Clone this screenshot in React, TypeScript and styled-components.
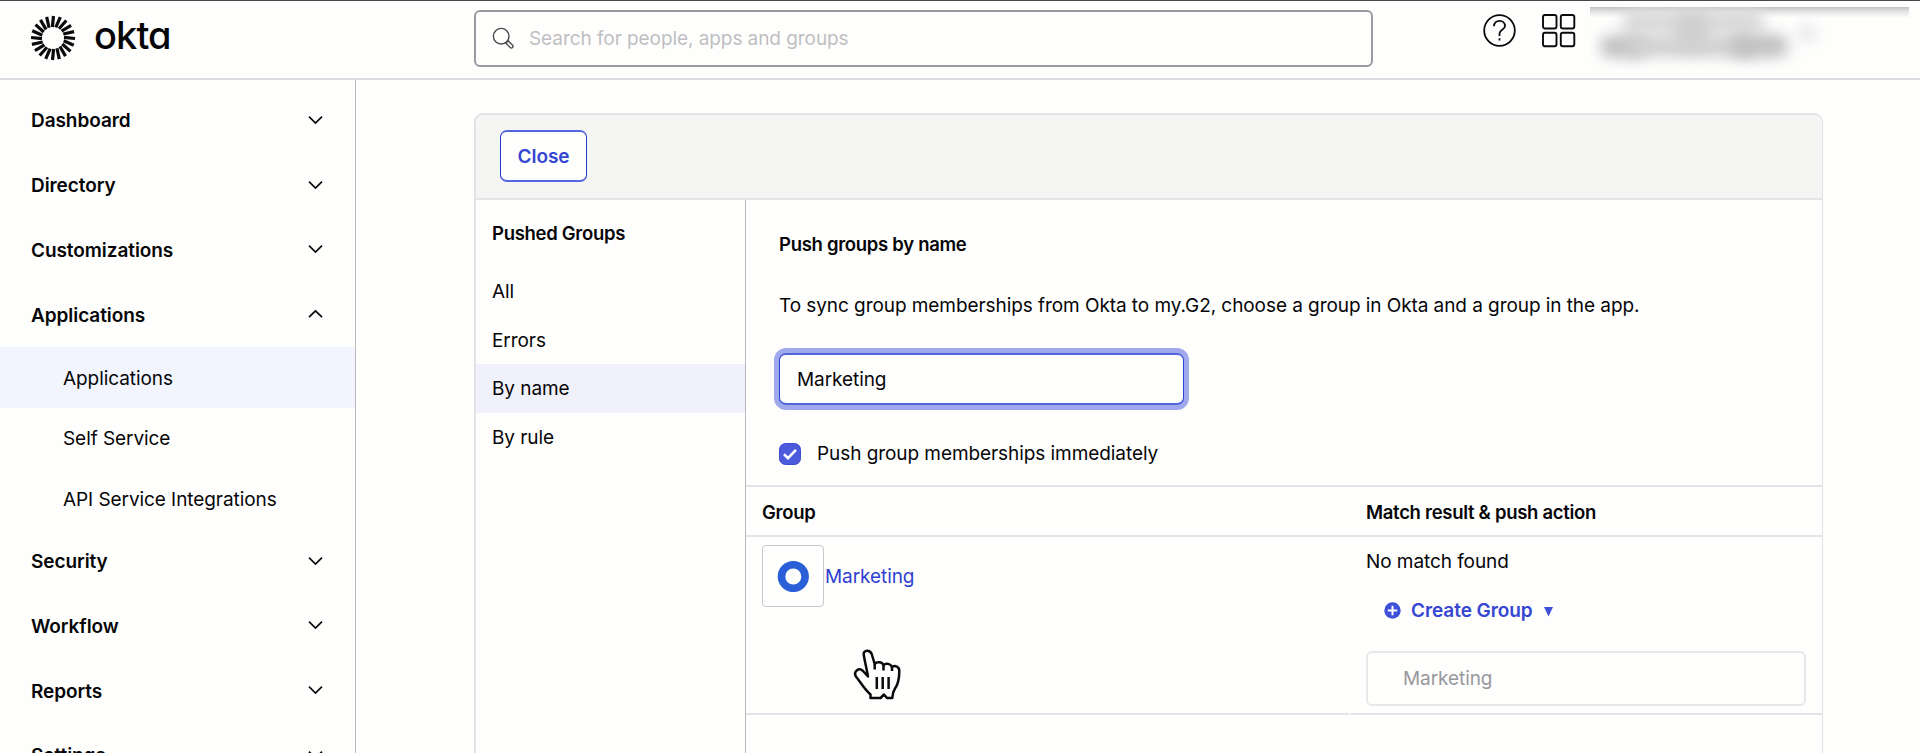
import React from 'react';
import styled, { createGlobalStyle, css } from 'styled-components';

const Global = createGlobalStyle`
  *, *::before, *::after { box-sizing: border-box; }
  body {
    margin: 0;
    background: #fefefd;
    color: #060608;
    font-family: Inter, 'Liberation Sans', sans-serif;
    font-size: 19px;
    letter-spacing: -0.07px;
    overflow: hidden;
  }
  input, button { font: inherit; letter-spacing: inherit; }
`;

const Page = styled.div`
  display: flex;
  flex-direction: column;
  height: 753px;
  overflow: hidden;
  border-top: 1px solid #47474c;
`;

const Header = styled.header`
  display: flex;
  align-items: flex-start;
  flex: none;
  height: 79px;
  border-bottom: 2px solid #dcdce1;
`;

const Brand = styled.div`
  display: flex;
  align-items: center;
  width: 474px;
  height: 74px;
  padding-left: 30px;
  gap: 18px;
`;

const Wordmark = styled.span`
  font-size: 38px;
  font-weight: 550;
  line-height: 40px;
  letter-spacing: -0.9px;
  font-feature-settings: 'cv11' 1;
  margin-top: -7px;
`;

const SearchBox = styled.div`
  display: flex;
  align-items: center;
  width: 899px;
  height: 57px;
  margin-top: 9px;
  padding-left: 16px;
  gap: 14px;
  border: 2px solid #9a9aa4;
  border-radius: 6px;
`;

const SearchInput = styled.input`
  flex: 1;
  border: 0;
  padding: 0;
  outline: 0;
  background: none;
  &::placeholder { color: #bfbfc2; opacity: 1; }
`;

const Tools = styled.div`
  display: flex;
  margin: 12px 14px 0 109px;
  gap: 25px;
`;

const Account = styled.div`
  position: relative;
  width: 319px;
  height: 71px;
  margin-top: 6px;
  overflow: hidden;
  background: linear-gradient(#c2c2c4 0, #e6e6e8 5px, #fefefd 11px);
`;

const Smudge = styled.span<{ $x: number; $y: number; $w: number; $h: number; $c: string }>`
  position: absolute;
  left: ${p => p.$x}px;
  top: ${p => p.$y}px;
  width: ${p => p.$w}px;
  height: ${p => p.$h}px;
  border-radius: 10px;
  background: ${p => p.$c};
  filter: blur(7px);
`;

const Body = styled.div`
  display: flex;
  flex: 1;
  min-height: 0;
`;

const Sidebar = styled.nav`
  flex: none;
  width: 356px;
  padding-top: 8px;
  border-right: 1px solid #b9b9bd;
  overflow: hidden;
`;

const NavItem = styled.div`
  display: flex;
  align-items: center;
  justify-content: space-between;
  height: 64.8px;
  padding: 1px 32px 0 31px;
  font-weight: 600;
`;

const SubItem = styled.div<{ $active?: boolean }>`
  display: flex;
  align-items: center;
  height: 60.5px;
  padding: 2px 0 0 63px;
  background: ${p => (p.$active ? '#f2f5fd' : 'transparent')};
`;

const Content = styled.main`
  flex: 1;
  min-width: 0;
  padding: 33px 97px 0 118px;
`;

const Card = styled.section`
  display: flex;
  flex-direction: column;
  height: 700px;
  border: 2px solid #e1e1e6;
  border-right-width: 1px;
  border-radius: 9px;
  overflow: hidden;
`;

const CardHeader = styled.div`
  flex: none;
  height: 85px;
  padding: 15px 0 0 24px;
  background: #f5f5f4;
  border-bottom: 2px solid #e4e4e4;
`;

const CloseButton = styled.button`
  width: 87px;
  height: 52px;
  padding: 1px 0 0;
  border: 1px solid;
  border-width: 2px 1px;
  border-color: #5566df #2436d0;
  border-radius: 7px;
  background: #fefefd;
  color: #3546d3;
  font-weight: 600;
`;

const Columns = styled.div`
  display: flex;
  flex: 1;
`;

const Filters = styled.aside`
  width: 270px;
  padding-top: 9px;
  border-right: 1px solid #b9b9bd;
`;

const heading = css`
  font-size: 18.5px;
  font-weight: 600;
  letter-spacing: -0.3px;
`;

const FilterTitle = styled.h3`
  ${heading}
  margin: 0 0 10px;
  padding-left: 16px;
  line-height: 48px;
`;

const FilterItem = styled.div<{ $active?: boolean }>`
  height: 48.6px;
  padding-left: 16px;
  line-height: 49px;
  background: ${p => (p.$active ? '#f1f1fb' : 'transparent')};
`;

const Panel = styled.div`
  flex: 1;
`;

const Form = styled.div`
  height: 285px;
  padding: 29px 33px 0;
`;

const FormTitle = styled.h2`
  ${heading}
  margin: 0;
  line-height: 30px;
`;

const Intro = styled.p`
  margin: 32px 0;
  line-height: 30px;
`;

const GroupInput = styled.input`
  display: block;
  width: 405px;
  height: 52px;
  padding: 0 17px;
  border: 1px solid;
  border-width: 2px 1px;
  border-color: #5365dd #2c3fd6;
  border-radius: 7px;
  outline: 0;
  background: #fefefd;
  box-shadow: 0 0 0 5px #a0a9ec;
  color: inherit;
`;

const CheckRow = styled.label`
  display: flex;
  align-items: center;
  gap: 16px;
  margin-top: 34px;
  line-height: 30px;
`;

const Row = styled.div<{ $h: number; $split?: boolean }>`
  display: grid;
  grid-template-columns: 604px 1fr;
  height: ${p => p.$h}px;
  border-top: 2px solid #e3e3e9;
  ${p =>
    p.$split &&
    css`
      border-top: 0;
      background: linear-gradient(90deg, #e3e3e9 603px, #fefefd 603px 604px, #e3e3e9 604px) top / 100% 2px no-repeat;
    `}
`;

const HeadCell = styled.div`
  ${heading}
  padding-left: 16px;
  line-height: 50px;
`;

const GroupCell = styled.div`
  display: flex;
  align-items: flex-start;
  padding: 8px 0 0 16px;
  line-height: 63px;
`;

const GroupIcon = styled.div`
  display: flex;
  align-items: center;
  justify-content: center;
  width: 62px;
  height: 62px;
  border: 1px solid #c9c9ce;
  border-radius: 4px;
`;

const GroupLink = styled.a`
  padding-left: 1px;
  color: #2f3fd0;
`;

const ActionCell = styled.div`
  padding: 10px 16px 0 16px;
`;

const Status = styled.div`
  line-height: 30px;
`;

const CreateAction = styled.div`
  display: flex;
  align-items: center;
  height: 30px;
  margin: 18px 0 26px;
  padding-left: 18px;
  color: #3546d3;
  font-weight: 600;
`;

const CreateLabel = styled.span`
  margin: 0 11px 0 10px;
`;

const TargetName = styled.div`
  height: 55px;
  padding-left: 35px;
  border: 2px solid #e8e8ea;
  border-radius: 6px;
  color: #98989c;
  line-height: 52px;
`;

const Pointer = styled.svg`
  position: absolute;
  left: 853px;
  top: 649px;
`;

const Chevron = ({ up }: { up?: boolean }) => (
  <svg width="15" height="10" viewBox="0 0 15 10" fill="none" stroke="#0b0b0e" strokeWidth="1.7">
    <path d={up ? 'M1 7.2 7.5 0.8 14 7.2' : 'M1 0.7 7.5 7.1 14 0.7'} />
  </svg>
);

const Burst = () => (
  <svg width="46" height="46" viewBox="-23 -23 46 46" stroke="#0b0b0e" strokeWidth="3.2">
    {Array.from({ length: 20 }, (_, i) => (
      <line key={i} x1="-0.6" y1="-11" x2="0.5" y2="-22" transform={`rotate(${i * 18})`} />
    ))}
  </svg>
);

const before = ['Dashboard', 'Directory', 'Customizations'];
const after = ['Security', 'Workflow', 'Reports', 'Settings'];

export default function App() {
  return (
    <>
      <Global />
      <Page>
        <Header>
          <Brand>
            <Burst />
            <Wordmark>okta</Wordmark>
          </Brand>
          <SearchBox>
            <svg width="23" height="23" viewBox="0 0 23 23" fill="none" stroke="#4b4b50" strokeWidth="1.4">
              <circle cx="9.2" cy="9.2" r="7.8" />
              <path d="M13.8 16.2 16.2 13.8 20.6 18.2A1.7 1.7 0 0 1 18.2 20.6Z" />
            </svg>
            <SearchInput placeholder="Search for people, apps and groups" />
          </SearchBox>
          <Tools>
            <svg width="35" height="35" viewBox="0 0 35 35" fill="none" stroke="#0b0b0e" strokeWidth="1.8">
              <circle cx="17.5" cy="17.5" r="15.3" />
              <path d="M12 13.2C12 5.9 23 6.2 23 13C23 16.9 17.5 16.6 17.5 20.5V23M17.5 25.3V27.6" />
            </svg>
            <svg width="34" height="35" viewBox="0 0 34 35" fill="none" stroke="#0b0b0e" strokeWidth="1.9">
              <rect x="1" y="2" width="13.5" height="13.5" rx="2" />
              <rect x="18.8" y="2" width="13.5" height="13.5" rx="2" />
              <rect x="1" y="19.8" width="13.5" height="13.5" rx="2" />
              <rect x="18.8" y="19.8" width="13.5" height="13.5" rx="2" />
            </svg>
          </Tools>
          <Account>
            <Smudge $x={32} $y={2} $w={142} $h={25} $c="#dadadb" />
            <Smudge $x={86} $y={6} $w={32} $h={38} $c="#cfcfd0" />
            <Smudge $x={10} $y={28} $w={46} $h={23} $c="#c2c2c4" />
            <Smudge $x={36} $y={28} $w={130} $h={22} $c="#d0d0d1" />
            <Smudge $x={140} $y={27} $w={58} $h={24} $c="#c2c2c4" />
            <Smudge $x={208} $y={17} $w={18} $h={18} $c="#e6e6ea" />
          </Account>
        </Header>
        <Body>
          <Sidebar>
            {before.map(t => (
              <NavItem key={t}>{t}<Chevron /></NavItem>
            ))}
            <NavItem>Applications<Chevron up /></NavItem>
            <SubItem $active>Applications</SubItem>
            <SubItem>Self Service</SubItem>
            <SubItem>API Service Integrations</SubItem>
            {after.map(t => (
              <NavItem key={t}>{t}<Chevron /></NavItem>
            ))}
          </Sidebar>
          <Content>
            <Card>
              <CardHeader>
                <CloseButton>Close</CloseButton>
              </CardHeader>
              <Columns>
                <Filters>
                  <FilterTitle>Pushed Groups</FilterTitle>
                  <FilterItem>All</FilterItem>
                  <FilterItem>Errors</FilterItem>
                  <FilterItem $active>By name</FilterItem>
                  <FilterItem>By rule</FilterItem>
                </Filters>
                <Panel>
                  <Form>
                    <FormTitle>Push groups by name</FormTitle>
                    <Intro>To sync group memberships from Okta to my.G2, choose a group in Okta and a group in the app.</Intro>
                    <GroupInput defaultValue="Marketing" />
                    <CheckRow>
                      <svg width="22" height="22" viewBox="0 0 22 22" fill="none">
                        <rect x="0.5" y="0.5" width="21" height="21" rx="6" fill="#4c5bdc" stroke="#3d4cd2" />
                        <path d="M5 11.3 9 15.2 17 6.8" stroke="#fff" strokeWidth="2.6" />
                      </svg>
                      Push group memberships immediately
                    </CheckRow>
                  </Form>
                  <Row $h={50}>
                    <HeadCell>Group</HeadCell>
                    <HeadCell>Match result &amp; push action</HeadCell>
                  </Row>
                  <Row $h={178}>
                    <GroupCell>
                      <GroupIcon>
                        <svg width="32" height="32" viewBox="0 0 32 32">
                          <circle cx="16.3" cy="16.5" r="11.8" fill="none" stroke="#2a5fd8" strokeWidth="7.6" />
                        </svg>
                      </GroupIcon>
                      <GroupLink>Marketing</GroupLink>
                    </GroupCell>
                    <ActionCell>
                      <Status>No match found</Status>
                      <CreateAction>
                        <svg width="17" height="17" viewBox="0 0 17 17">
                          <circle cx="8.5" cy="8.5" r="8.2" fill="#3f51d9" />
                          <path d="M8.5 3.8V13.2M3.8 8.5H13.2" stroke="#fff" strokeWidth="2" />
                        </svg>
                        <CreateLabel>Create Group</CreateLabel>
                        <svg width="9" height="13" viewBox="0 0 9 13">
                          <path d="M0 3H9L4.5 12.5Z" fill="#3f51d9" />
                        </svg>
                      </CreateAction>
                      <TargetName>Marketing</TargetName>
                    </ActionCell>
                  </Row>
                  <Row $h={60} $split />
                </Panel>
              </Columns>
            </Card>
          </Content>
        </Body>
        <Pointer width="48" height="51" viewBox="0 0 48 51" fill="#fefefd" stroke="#0b0b0e" strokeWidth="2.5" strokeLinejoin="round">
          <path d="M17.5 49V45.5C12 41 8 34 3.3 28C-0.5 22.5 6 18 10 22L15 27.5C13.5 19 11.5 11 10.7 5.5C10.5 0.5 17 0.5 18.7 5L21.7 15C23.5 12.3 29 12.5 30.5 16C33 13.8 37.5 14.5 39 18C42 16 46.5 17.5 46.3 22C46.3 28 46 34 42 39.5C40 42.5 39.5 45 39.3 49H34L31 45.5L27.5 49Z" />
          <path d="M21.7 15V20.5M30.5 16V21.5M39 18V22M23.8 28V40M29.7 28V40M35.6 28V40" fill="none" />
        </Pointer>
      </Page>
    </>
  );
}
